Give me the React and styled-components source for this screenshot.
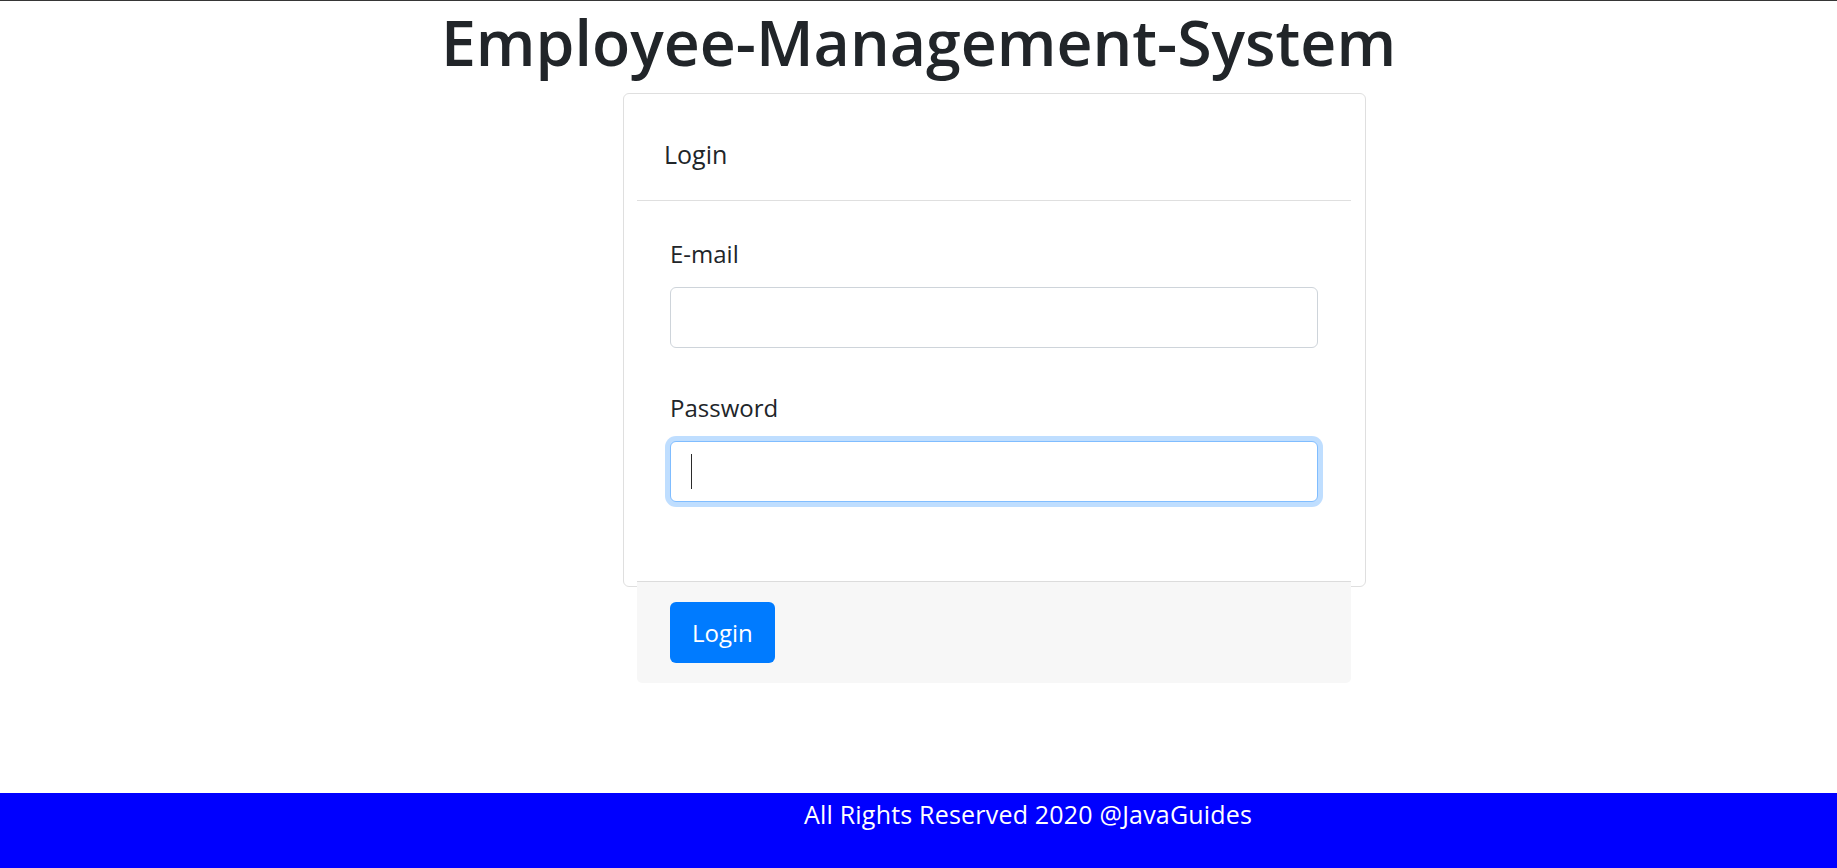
import React from "react";
import styled, { createGlobalStyle } from "styled-components";

const GlobalStyle = createGlobalStyle`
  html, body {
    margin: 0;
    padding: 0;
    background: #fff;
  }
  body {
    font-family: "Open Sans", "Liberation Sans", sans-serif;
    color: #212529;
  }
  * {
    box-sizing: border-box;
  }
`;

const Page = styled.div`
  min-height: 100vh;
  display: flex;
  flex-direction: column;
  border-top: 1px solid #363636;
`;

const Title = styled.h1`
  margin: 0;
  padding-top: 2px;
  font-size: 62.6px;
  font-weight: 600;
  line-height: 77px;
  text-align: center;
  color: #212529;
`;

const Main = styled.main`
  margin-top: 13px;
  display: grid;
  grid-template-columns: 623px 743px;
`;

const Card = styled.div`
  grid-column: 2;
  height: 494px;
  border: 1px solid #dfdfdf;
  border-radius: 6px;
  background: #fff;
`;

const CardInner = styled.div`
  margin: 0 14px 0 13px;
`;

const CardHeader = styled.div`
  padding: 42px 27px 28px;
  border-bottom: 1px solid #dfdfdf;
  font-size: 25px;
  line-height: 36px;
`;

const CardBody = styled.form`
  padding: 35px 33px 79px;
`;

const FormGroup = styled.div`
  & + & {
    margin-top: 42px;
  }
`;

const Label = styled.label`
  display: block;
  margin-bottom: 15px;
  font-size: 24px;
  line-height: 36px;
  color: #212529;
`;

const InputWrap = styled.div`
  position: relative;
`;

const Input = styled.input`
  display: block;
  width: 100%;
  height: 61px;
  padding: 0 20px;
  font-family: inherit;
  font-size: 24px;
  color: #495057;
  background: #fff;
  border: 1px solid ${(p) => (p.$focused ? "#80bdff" : "#ced4da")};
  border-radius: 6px;
  outline: none;
  caret-color: transparent;
  box-shadow: ${(p) =>
    p.$focused ? "0 0 0 5px rgba(0, 123, 255, 0.25)" : "none"};
`;

// fake caret so the focused field looks like the screenshot
const Caret = styled.span`
  position: absolute;
  left: 21px;
  top: 13px;
  width: 1px;
  height: 35px;
  background: #2b2b2b;
`;

const CardFooter = styled.div`
  padding: 20px 33px;
  background: #f7f7f7;
  border-top: 1px solid #dcdcdc;
  border-radius: 0 0 5px 5px;
`;

const Button = styled.button`
  height: 61px;
  padding: 0 22px;
  display: inline-flex;
  align-items: center;
  font-family: inherit;
  font-size: 24px;
  color: #fff;
  background: #007bff;
  border: none;
  border-radius: 6px;
  cursor: pointer;
`;

const Footer = styled.footer`
  margin-top: auto;
  height: 75px;
  padding: 3px 0 0 804px;
  background: #0000ff;
  color: #fff;
  font-size: 25px;
  letter-spacing: 0.2px;
  line-height: 36px;
`;

function App() {
  return (
    <Page>
      <GlobalStyle />
      <Title>Employee-Management-System</Title>
      <Main>
        <Card>
          <CardInner>
            <CardHeader>Login</CardHeader>
            <CardBody onSubmit={(e) => e.preventDefault()}>
              <FormGroup>
                <Label htmlFor="email">E-mail</Label>
                <Input id="email" type="email" />
              </FormGroup>
              <FormGroup>
                <Label htmlFor="password">Password</Label>
                <InputWrap>
                  <Input id="password" type="password" $focused />
                  <Caret />
                </InputWrap>
              </FormGroup>
            </CardBody>
            <CardFooter>
              <Button type="button">Login</Button>
            </CardFooter>
          </CardInner>
        </Card>
      </Main>
      <Footer>All Rights Reserved 2020 @JavaGuides</Footer>
    </Page>
  );
}

export default App;
